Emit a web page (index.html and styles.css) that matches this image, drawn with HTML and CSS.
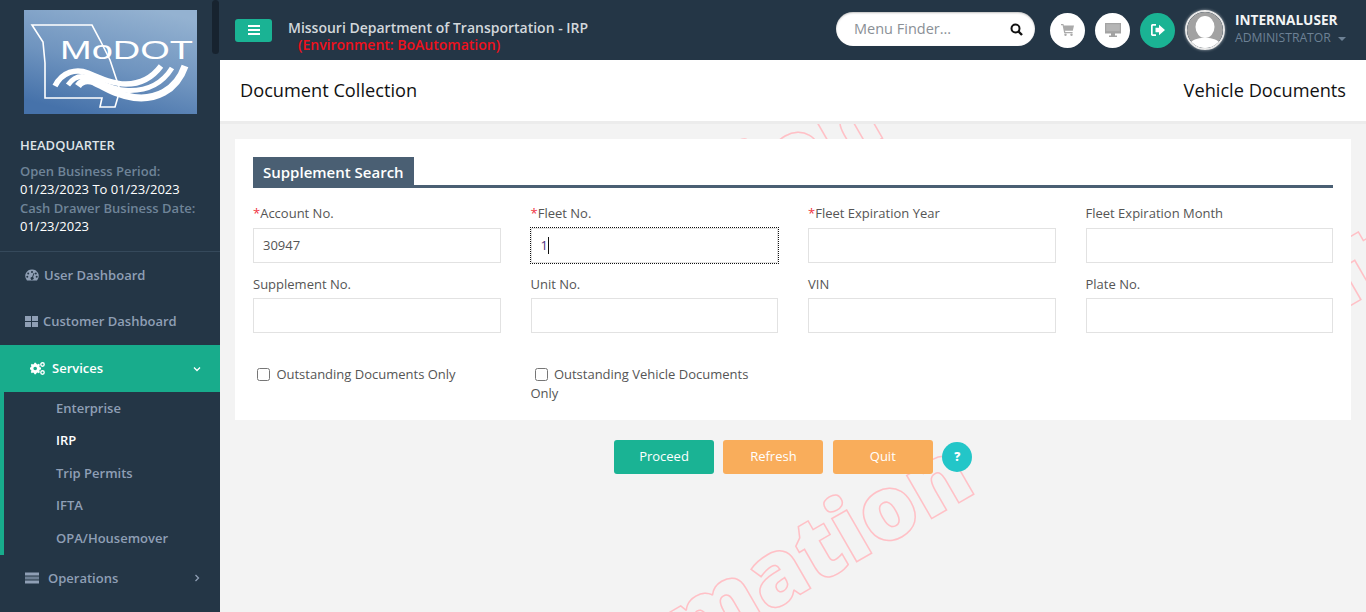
FILE: index.html
```html
<!DOCTYPE html>
<html lang="en">

<head>
    <meta charset="UTF-8">
    <meta name="viewport" content="width=device-width, initial-scale=1.0">
    <title>Document Collection</title>
    <link rel="stylesheet" href="styles.css">
</head>

<body>
    <aside class="sidebar">
        <div class="scroll-thumb"></div>
        <div class="logo">
            <svg width="173" height="104" viewBox="0 0 173 104">
                <defs>
                    <linearGradient id="logo-bg" x1="0.75" y1="0" x2="0.35" y2="1">
                        <stop offset="0" stop-color="#94b2d1"/>
                        <stop offset="0.55" stop-color="#6f94bf"/>
                        <stop offset="1" stop-color="#4672aa"/>
                    </linearGradient>
                </defs>
                <rect width="173" height="104" fill="url(#logo-bg)"/>
                <path d="M8 15H68L76 30L86 50L96 80L91 97H76L78 88H21V53L19 32Z" fill="none" stroke="#fff" stroke-width="1.6"/>
                <text class="logo-text" x="36" y="49" textLength="133" lengthAdjust="spacingAndGlyphs">MoDOT</text>
                <g fill="none" stroke="#fff">
                    <path d="M31 76C38 62 52 58 64 63C78 69 90 74 102 74C116 74 128 68 137 56" stroke-width="5.5"/>
                    <path d="M44 75C50 66 58 65 66 68C80 74 90 80 104 80.5C122 81 138 74 148 58" stroke-width="5"/>
                    <path d="M54 76C58 70 64 70 70 72C82 78 92 85 110 87.5C130 90 152 82 161 56" stroke-width="7"/>
                </g>
            </svg>
        </div>
        <div class="branch">
            <h4>HEADQUARTER</h4>
            <p class="muted">Open Business Period:</p>
            <p>01/23/2023 To 01/23/2023</p>
            <p class="muted">Cash Drawer Business Date:</p>
            <p>01/23/2023</p>
        </div>
        <ul class="menu">
            <li class="menu-item">
                <svg class="menu-icon" viewBox="0 0 14 12"><path d="M7 0.5A6.5 6.5 0 0 0 1.4 10.6L2 11.5H12L12.6 10.6A6.5 6.5 0 0 0 7 0.5ZM7 2A1 1 0 1 1 7 4A1 1 0 0 1 7 2ZM3.2 3.6A1 1 0 1 1 3.2 5.6A1 1 0 0 1 3.2 3.6ZM10.8 3.6A1 1 0 1 1 10.8 5.6A1 1 0 0 1 10.8 3.6ZM2.3 6.8A1 1 0 1 1 2.3 8.8A1 1 0 0 1 2.3 6.8ZM11.7 6.8A1 1 0 1 1 11.7 8.8A1 1 0 0 1 11.7 6.8ZM8.7 4L9.5 4.3L8 8.2A1.5 1.5 0 1 1 7.1 7.9Z" fill-rule="evenodd"/></svg>
                User Dashboard
            </li>
            <li class="menu-item">
                <svg class="menu-icon small" viewBox="0 0 13 11"><path d="M0 0H6V5H0ZM7 0H13V5H7ZM0 6H6V11H0ZM7 6H13V11H7Z"/></svg>
                Customer Dashboard
            </li>
            <li class="menu-item active">
                <svg class="menu-icon" viewBox="0 0 15 13"><path d="M5.5 2.5L6.6 2.9L7.8 2.2L9 3.4L8.3 4.6L8.7 5.7L10 6.1V7.9L8.7 8.3L8.3 9.4L9 10.6L7.8 11.8L6.6 11.1L5.5 11.5L5 12.8H3.4L3 11.5L1.9 11.1L0.9 11.8L-0.2 10.6L0.4 9.4L0 8.3L-1 7.9V6.1L0 5.7L0.4 4.6L-0.2 3.4L0.9 2.2L1.9 2.9L3 2.5L3.4 1.2H5ZM4.2 5.2A1.8 1.8 0 1 0 4.2 8.8A1.8 1.8 0 1 0 4.2 5.2Z" transform="translate(1 -0.5)" fill-rule="evenodd"/><circle cx="12.5" cy="2.5" r="1.7" fill="none" stroke="#fff" stroke-width="1.4"/><circle cx="12.5" cy="10.5" r="1.7" fill="none" stroke="#fff" stroke-width="1.4"/></svg>
                Services
                <svg class="chevron" viewBox="0 0 8 5"><path d="M1 1L4 4L7 1" fill="none" stroke="currentColor" stroke-width="1.3"/></svg>
            </li>
            <li>
                <ul class="submenu">
                    <li>Enterprise</li>
                    <li class="current">IRP</li>
                    <li>Trip Permits</li>
                    <li>IFTA</li>
                    <li>OPA/Housemover</li>
                </ul>
            </li>
            <li class="menu-item">
                <svg class="menu-icon server" viewBox="0 0 14 11"><path d="M0 0H14V3H0Z"/><path d="M0 4H14V7H0Z" opacity="0.7"/><path d="M0 8H14V11H0Z"/></svg>
                Operations
                <svg class="chevron" viewBox="0 0 5 8"><path d="M1 1L4 4L1 7" fill="none" stroke="currentColor" stroke-width="1.3"/></svg>
            </li>
        </ul>
    </aside>

    <div class="main">
        <header class="topbar">
            <button class="toggle">
                <svg width="12" height="10" viewBox="0 0 12 10"><path d="M0 0H12V2H0ZM0 4H12V6H0ZM0 8H12V10H0Z" fill="#fff"/></svg>
            </button>
            <div class="app-title">
                <div>Missouri Department of Transportation - IRP</div>
                <div class="env">(Environment: BoAutomation)</div>
            </div>
            <div class="finder">
                <input type="text" placeholder="Menu Finder...">
                <svg width="13" height="13" viewBox="0 0 13 13"><circle cx="5.5" cy="5.5" r="4" fill="none" stroke="#111" stroke-width="2"/><path d="M8.5 8.5L12 12" stroke="#111" stroke-width="2.4"/></svg>
            </div>
            <span class="round-btn">
                <svg width="13" height="12" viewBox="0 0 13 12"><path d="M0 0H2.4L2.8 1.5H13L11.8 6.8H4L4.3 8H11.6V9.2H3.2L1.6 1.2H0Z" fill="#aaa"/><circle cx="4.5" cy="10.7" r="1.2" fill="#aaa"/><circle cx="10.5" cy="10.7" r="1.2" fill="#aaa"/></svg>
            </span>
            <span class="round-btn">
                <svg width="16" height="14" viewBox="0 0 16 14"><path d="M0 0H16V10.5H10V12.5H12V14H4V12.5H6V10.5H0Z" fill="#a3a3a3"/><path d="M1.2 1.2H14.8V8.2H1.2Z" fill="#b5b5b5"/></svg>
            </span>
            <span class="round-btn green">
                <svg width="14" height="12" viewBox="0 0 14 12"><path d="M5 0.8H1.8A1.3 1.3 0 0 0 0.8 2V10A1.3 1.3 0 0 0 1.8 11.2H5" fill="none" stroke="#fff" stroke-width="1.8"/><path d="M4.5 3.8H8V0.8L14 6L8 11.2V8.2H4.5Z" fill="#fff"/></svg>
            </span>
            <span class="avatar">
                <svg width="36" height="36" viewBox="0 0 36 36"><circle cx="18" cy="18" r="18" fill="#a2a2a2"/><ellipse cx="18" cy="15" rx="9.5" ry="11" fill="#fff"/><path d="M3 31C8 26 13 26 18 26C23 26 28 26 33 31C29 35 23 36 18 36C13 36 7 35 3 31Z" fill="#fff"/></svg>
            </span>
            <div class="user">
                <div class="user-name">INTERNALUSER</div>
                <div class="user-role">ADMINISTRATOR <i class="caret"></i></div>
            </div>
        </header>

        <div class="page-head">
            <h2>Document Collection</h2>
            <h2>Vehicle Documents</h2>
        </div>

        <main class="content">
            <div class="watermark">
                <span class="wm wm-low">BoAutomation</span>
                <span class="wm wm-top">utomation</span>
                <span class="wm wm-right">BoAutomation</span>
            </div>

            <section class="card">
                <div class="card-title"><span>Supplement Search</span></div>
                <div class="form-grid">
                    <div class="field">
                        <label><em>*</em>Account No.</label>
                        <input type="text" value="30947">
                    </div>
                    <div class="field">
                        <label><em>*</em>Fleet No.</label>
                        <div class="focus-wrap">
                            <input type="text" class="focused" value="1">
                            <i class="text-caret"></i>
                        </div>
                    </div>
                    <div class="field">
                        <label><em>*</em>Fleet Expiration Year</label>
                        <input type="text">
                    </div>
                    <div class="field">
                        <label>Fleet Expiration Month</label>
                        <input type="text">
                    </div>
                    <div class="field">
                        <label>Supplement No.</label>
                        <input type="text">
                    </div>
                    <div class="field">
                        <label>Unit No.</label>
                        <input type="text">
                    </div>
                    <div class="field">
                        <label>VIN</label>
                        <input type="text">
                    </div>
                    <div class="field">
                        <label>Plate No.</label>
                        <input type="text">
                    </div>
                </div>
                <div class="form-grid checks">
                    <div class="check"><input type="checkbox"> Outstanding Documents Only</div>
                    <div class="check"><input type="checkbox"> Outstanding Vehicle Documents Only</div>
                </div>
            </section>

            <div class="actions">
                <button class="btn btn-green">Proceed</button>
                <button class="btn btn-orange">Refresh</button>
                <button class="btn btn-orange">Quit</button>
                <span class="help">?</span>
            </div>
        </main>
    </div>
</body>

</html>
```

FILE: styles.css
```css
/* General Reset */
* {
    margin: 0;
    padding: 0;
    box-sizing: border-box;
}

html, body {
    height: 100%;
    overflow: hidden;
}

body {
    display: flex;
    font-family: "Open Sans", Arial, sans-serif;
    font-size: 13px;
    line-height: 1.42857;
    color: #444;
    background-color: #f3f3f3;
}

ul {
    list-style: none;
}

/* Sidebar */
.sidebar {
    position: relative;
    width: 220px;
    flex-shrink: 0;
    background: #243646;
    overflow: hidden;
}

.scroll-thumb {
    position: absolute;
    top: 0;
    left: 212px;
    width: 7px;
    height: 54px;
    border-radius: 4px;
    background: #17232f;
}

.logo {
    padding: 10px 0 0 24px;
    height: 114px;
}

.logo svg {
    display: block;
}

.logo-text {
    font-family: "Liberation Sans", Arial, sans-serif;
    font-size: 25px;
    fill: #fff;
}

.branch {
    padding: 22px 20px 16px;
    height: 138px;
    border-bottom: 1px solid #35495b;
    color: #fff;
    font-size: 13px;
    line-height: 18.5px;
}

.branch h4 {
    font-size: 13px;
    font-weight: 600;
    color: #dfe4e8;
    margin-bottom: 7px;
}

.branch .muted {
    color: #6f8498;
    font-weight: 600;
}

.menu-item {
    display: flex;
    align-items: center;
    height: 46.5px;
    padding-left: 25px;
    color: #8f9fb5;
    font-weight: 600;
}

.menu-item.active {
    height: 47px;
    padding-left: 30px;
    background: #18ac8c;
    color: #fff;
}

.menu-icon {
    width: 14px;
    height: 12px;
    margin-right: 5px;
    fill: currentColor;
}

.menu-icon.small {
    width: 13px;
    height: 11px;
}

.menu-icon.server {
    margin-right: 9px;
}

.active .menu-icon {
    width: 15px;
    height: 13px;
    margin-right: 7px;
}

.chevron {
    position: absolute;
    left: 193px;
    width: 8px;
    height: 8px;
}

.submenu {
    border-left: 4px solid #18ac8c;
    padding: 0 0 1px 52px;
    height: 163px;
    color: #8f9fb5;
    font-weight: 600;
}

.submenu li {
    height: 32.4px;
    line-height: 32.4px;
}

.submenu .current {
    color: #fff;
}

/* Top bar */
.main {
    flex: 1;
    min-width: 0;
    display: flex;
    flex-direction: column;
}

.topbar {
    display: flex;
    align-items: center;
    height: 60px;
    flex-shrink: 0;
    padding-left: 15px;
    background: #243646;
}

.toggle {
    width: 37px;
    height: 23px;
    margin-right: 16px;
    border: 0;
    border-radius: 3px;
    background: #1ab394;
    display: flex;
    align-items: center;
    justify-content: center;
}

.app-title {
    width: 548px;
    font-size: 14px;
    font-weight: 600;
    line-height: 17px;
    color: #d3d8dc;
    padding-top: 12px;
}

.env {
    padding-left: 10px;
    color: #f0101c;
}

.finder {
    display: flex;
    align-items: center;
    width: 199px;
    height: 34px;
    margin-top: -2px;
    padding: 0 12px 0 18px;
    border-radius: 17px;
    background: #fff;
    box-shadow: inset 0 1px 2px rgba(0, 0, 0, 0.25);
    margin-right: 15px;
}

.finder input {
    flex: 1;
    min-width: 0;
    padding-bottom: 2px;
    border: 0;
    outline: 0;
    background: none;
    font-family: inherit;
    font-size: 14.5px;
}

.finder input::placeholder {
    color: #8a8f96;
    opacity: 1;
}

.round-btn {
    display: flex;
    align-items: center;
    justify-content: center;
    width: 35px;
    height: 35px;
    margin-right: 10px;
    border-radius: 50%;
    background: #fff;
}

.round-btn.green {
    background: #1ab394;
}

.avatar {
    width: 40px;
    height: 40px;
    border: 2px solid #e8e8e8;
    border-radius: 50%;
    overflow: hidden;
    box-shadow: 0 0 3px rgba(255, 255, 255, 0.6);
    flex-shrink: 0;
}

.avatar svg {
    display: block;
}

.user {
    margin-left: 10px;
    margin-top: -2px;
}

.user-name {
    font-size: 13.6px;
    font-weight: 700;
    line-height: 18px;
    color: #f2f4f5;
}

.user-role {
    font-size: 12.2px;
    line-height: 18px;
    color: #6d8195;
}

.caret {
    display: inline-block;
    margin-left: 4px;
    vertical-align: middle;
    border-top: 4px solid #6d8195;
    border-left: 4px solid transparent;
    border-right: 4px solid transparent;
}

/* Page head */
.page-head {
    position: relative;
    z-index: 1;
    display: flex;
    justify-content: space-between;
    align-items: center;
    height: 64px;
    flex-shrink: 0;
    padding: 0 20px 2px;
    background: #fff;
    border-bottom: 3px solid #ececec;
}

.page-head h2 {
    font-size: 18.2px;
    font-weight: 500;
    color: #111;
}

/* Content */
.content {
    position: relative;
    flex: 1;
    padding: 15px 15px 0;
    overflow: hidden;
}

.watermark {
    position: absolute;
    inset: 0;
}

.wm {
    position: absolute;
    font-family: "Open Sans", Arial, sans-serif;
    font-size: 90px;
    font-weight: 800;
    line-height: 1;
    white-space: nowrap;
    color: transparent;
    -webkit-text-stroke: 1.5px #ffc0c6;
    transform: rotate(-30deg);
    transform-origin: 100% 100%;
}

.wm-low {
    right: 382px;
    top: 286px;
}

.wm-top {
    right: 474px;
    top: -70px;
}

.wm-right {
    left: 940px;
    top: 213px;
    transform-origin: 0 100%;
}

.card {
    position: relative;
    background: #fff;
    padding: 18px 18px 17px;
}

.card-title {
    border-bottom: 3px solid #4a5f73;
    margin-bottom: 16px;
    height: 31px;
}

.card-title span {
    display: inline-block;
    height: 28px;
    padding: 0 10px;
    background: #4a5f73;
    color: #fff;
    font-size: 15px;
    font-weight: 600;
    line-height: 30px;
}

.form-grid {
    display: grid;
    grid-template-columns: repeat(4, 1fr);
    column-gap: 30px;
    row-gap: 12px;
}

.field label {
    display: block;
    margin-bottom: 5px;
    color: #555;
}

.field em {
    font-style: normal;
    color: #f0333f;
}

.field input {
    display: block;
    width: 100%;
    height: 35px;
    padding: 0 9px;
    border: 1px solid #e2e2e2;
    border-radius: 0;
    outline: 0;
    background: #fff;
    color: #555;
    font-family: inherit;
    font-size: 13px;
}

.focus-wrap {
    position: relative;
}

.field input.focused {
    outline: 1px dotted #111;
    color: #4b2c7e;
}

.text-caret {
    position: absolute;
    left: 17px;
    top: 9px;
    width: 1px;
    height: 17px;
    background: #111;
}

.checks {
    margin-top: 32px;
    line-height: 19px;
}

.check {
    color: #555;
}

.check input {
    width: 13px;
    height: 13px;
    margin: 0 3px 0 4px;
    vertical-align: -2px;
}

/* Buttons */
.actions {
    position: relative;
    display: flex;
    align-items: flex-start;
    padding: 20px 0 0 379px;
}

.btn {
    width: 100px;
    height: 34px;
    margin-right: 9.4px;
    padding-bottom: 2px;
    border: 0;
    border-radius: 3px;
    color: #fff;
    font-family: inherit;
    font-size: 13px;
}

.btn-green {
    background: #1ab394;
}

.btn-orange {
    background: #f9ad5b;
}

.help {
    width: 30px;
    height: 30px;
    margin-top: 2px;
    border-radius: 50%;
    background: #23c6c8;
    color: #fff;
    font-size: 12px;
    font-weight: 800;
    line-height: 30px;
    text-align: center;
}
```
